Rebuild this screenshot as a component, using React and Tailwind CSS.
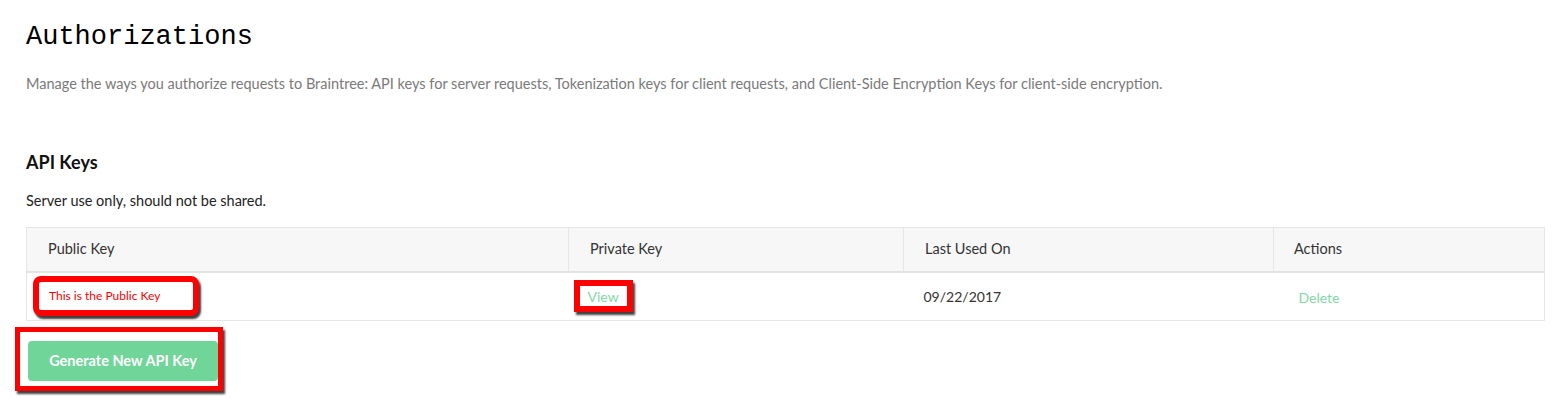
import React from "react";

const keys = [
  { publicKey: "This is the Public Key", lastUsed: "09/22/2017" },
];

export default function App() {
  return (
    <div className="min-h-screen bg-white pl-[26px] pr-[19px] pt-[21px] font-['Lato','Open_Sans',sans-serif]">
      <h1 className="font-['Liberation_Mono','Courier_New',monospace] text-[27px] leading-[32px] text-[#000]">
        Authorizations
      </h1>
      <p className="mt-[21px] text-[14.5px] leading-[20px] text-[#7a7a7a]">
        Manage the ways you authorize requests to Braintree: API keys for server requests, Tokenization keys for client requests, and Client-Side Encryption Keys for client-side encryption.
      </p>

      <h2 className="mt-[56px] text-[18px] font-bold leading-[24px] text-[#111]">API Keys</h2>
      <p className="mt-[17px] text-[14.5px] leading-[20px] text-[#222]">Server use only, should not be shared.</p>

      {/* keys table */}
      <table className="mt-[16px] w-full border-collapse border border-[#e6e6e6] text-[14.5px]">
        <thead>
          <tr className="h-[44px] bg-[#f7f7f7] text-left text-[#333] border-b-2 border-[#e3e3e3]">
            <th className="w-[542px] px-[21px] font-normal">Public Key</th>
            <th className="w-[335px] border-l border-[#e6e6e6] px-[21px] font-normal">Private Key</th>
            <th className="w-[370px] border-l border-[#e6e6e6] px-[21px] font-normal">Last Used On</th>
            <th className="border-l border-[#e6e6e6] px-[20px] font-normal">Actions</th>
          </tr>
        </thead>
        <tbody>
          {keys.map((k) => (
            <tr key={k.publicKey} className="h-[49px]">
              <td className="px-[6px] align-middle">
                <div className="flex h-[40px] w-[166px] items-center rounded-[8px] border-[6px] border-[#ff0000] bg-white pl-[10px] text-[12px] text-[#ff0000] shadow-[2px_3px_2px_rgba(0,0,0,0.75)]">
                  {k.publicKey}
                </div>
              </td>
              <td className="px-[5px] align-middle">
                <span className="inline-flex h-[32px] items-center border-[6px] border-[#ff0000] px-[8px] text-[14px] text-[#7fd9a6] shadow-[2px_3px_2px_rgba(0,0,0,0.75)]">
                  View
                </span>
              </td>
              <td className="px-[20px] align-middle text-[14px] text-[#333]">{k.lastUsed}</td>
              <td className="px-[25px] pt-[3px] align-middle text-[14px] text-[#7fd9a6]">Delete</td>
            </tr>
          ))}
        </tbody>
      </table>

      <div className="-ml-[11px] mt-[6px] inline-block border-[5px] border-[#ff0000] pb-[5px] pl-[8px] pt-[9px] shadow-[2px_3px_2px_rgba(0,0,0,0.75)]">
        <button className="h-[40px] w-[190px] rounded-[4px] bg-[#6fd598] text-[14.5px] font-bold text-white">
          Generate New API Key
        </button>
      </div>
    </div>
  );
}
